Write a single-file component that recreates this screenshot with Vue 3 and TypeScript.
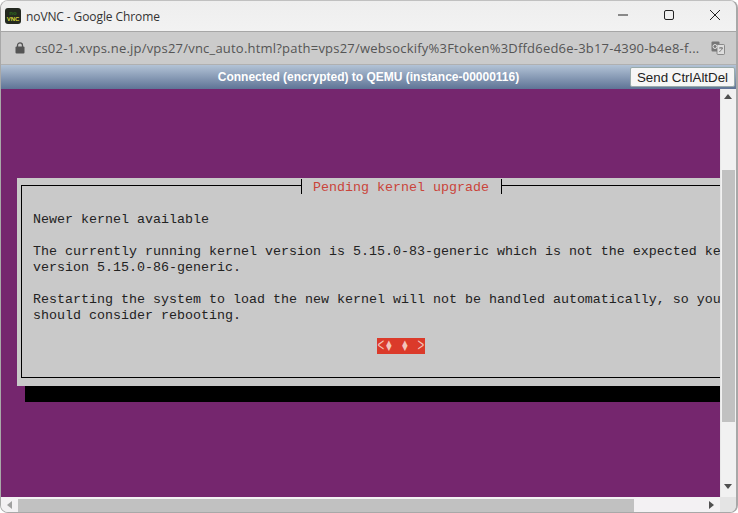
<script setup lang="ts">
const lines: string[] = [
  'Newer kernel available',
  '',
  'The currently running kernel version is 5.15.0-83-generic which is not the expected kernel',
  'version 5.15.0-86-generic.',
  '',
  'Restarting the system to load the new kernel will not be handled automatically, so you',
  'should consider rebooting.',
]
const okCells: string[] = ['<', '♦', ' ', '♦', ' ', '>']
</script>

<template>
  <div class="window">
    <header class="titlebar">
      <div class="favicon"><span class="no">no</span><span class="vnc">VNC</span></div>
      <span class="wintitle">noVNC - Google Chrome</span>
      <div class="controls">
        <svg width="10" height="10" viewBox="0 0 10 10"><path d="M0 5h10" stroke="#222" stroke-width="1" fill="none"/></svg>
        <svg width="10" height="10" viewBox="0 0 10 10"><rect x="0.5" y="0.5" width="9" height="9" rx="1.5" stroke="#222" fill="none"/></svg>
        <svg width="10" height="10" viewBox="0 0 10 10"><path d="M0 0l10 10M10 0L0 10" stroke="#222" stroke-width="1" fill="none"/></svg>
      </div>
    </header>
    <div class="addressbar">
      <svg class="lock" width="10" height="12" viewBox="0 0 10 12"><path d="M2.5 5V3.4a2.5 2.5 0 0 1 5 0V5" stroke="#555" stroke-width="1.3" fill="none"/><rect x="0.5" y="4.6" width="9" height="7" rx="1" fill="#555"/></svg>
      <span class="url">cs02-1.xvps.ne.jp/vps27/vnc_auto.html?path=vps27/websockify%3Ftoken%3Dffd6ed6e-3b17-4390-b4e8-f...</span>
      <svg class="translate" width="14" height="14" viewBox="0 0 14 14"><rect x="0.5" y="0.5" width="8" height="10" rx="1" fill="#777"/><rect x="6" y="3.5" width="7.5" height="10" rx="1" fill="#ddd" stroke="#777" stroke-width="0.8"/><circle cx="4" cy="5.5" r="2" fill="none" stroke="#eee" stroke-width="0.9"/><path d="M8 7h4M10 6v1M11.3 7c-.5 2-1.7 3-3 3.6" stroke="#666" stroke-width="0.8" fill="none"/></svg>
    </div>
    <div class="statusbar">
      <span class="status">Connected (encrypted) to QEMU (instance-00000116)</span>
      <button class="cad">Send CtrlAltDel</button>
    </div>
    <div class="viewport">
      <main class="screen">
        <section class="dialog">
          <div class="frame">
            <h1 class="dlgtitle">Pending kernel upgrade</h1>
            <div class="message">
              <div v-for="(l, i) in lines" :key="i" class="line">{{ l }}</div>
            </div>
            <div class="okrow">
              <div class="ok"><span v-for="(c, i) in okCells" :key="i" class="cell">{{ c }}</span></div>
            </div>
          </div>
        </section>
      </main>
      <aside class="vscroll">
        <i class="arrow up"></i>
        <div class="vthumb"></div>
        <i class="arrow down"></i>
      </aside>
      <div class="hscroll">
        <i class="arrow left"></i>
        <div class="hthumb"></div>
        <i class="arrow right"></i>
      </div>
      <div class="corner"></div>
    </div>
  </div>
</template>

<style>
html, body { margin: 0; background: #fff; }
</style>

<style scoped>
.window {
  width: 738px;
  height: 513px;
  box-sizing: border-box;
  display: flex;
  flex-direction: column;
  overflow: hidden;
  border: 1px solid #a8a8a8;
  border-top-color: #c0c0c0;
  border-right-width: 2px;
  border-radius: 8px;
  background: #f0f0f0;
  font-family: "Open Sans", sans-serif;
}
.titlebar {
  height: 30px;
  flex: none;
  display: flex;
  align-items: center;
  padding-left: 4px;
  background: linear-gradient(#eeeeee, #f2f2f2);
  border-bottom: 1px solid #a6a6a6;
}
.favicon {
  width: 16px;
  height: 16px;
  border-radius: 3px;
  background: #23281f;
  display: flex;
  flex-direction: column;
  align-items: center;
  justify-content: center;
  font: bold 6px/6px "Liberation Sans", sans-serif;
}
.no { color: #2e6b1e; }
.vnc { color: #d8d838; }
.wintitle {
  margin-left: 5px;
  font-size: 12px;
  letter-spacing: -0.1px;
  color: #333;
}
.controls {
  margin-left: auto;
  display: flex;
  gap: 36px;
  padding-right: 16px;
  margin-bottom: 2px;
}
.addressbar {
  height: 33px;
  flex: none;
  box-sizing: border-box;
  display: flex;
  align-items: center;
  padding-left: 14px;
  background: #cbcbcb;
  border-bottom: 1px solid #b0b0b0;
}
.url {
  margin-left: 10px;
  font-size: 13px;
  color: #555;
  white-space: nowrap;
  letter-spacing: 0.21px;
}
.translate { margin-left: auto; margin-right: 11px; }
.statusbar {
  height: 24px;
  flex: none;
  position: relative;
  display: flex;
  justify-content: center;
  align-items: center;
  background: linear-gradient(#b3c3d6, #5f7496);
}
.status {
  color: #fff;
  font: bold 12px "Liberation Sans", sans-serif;
}
.cad {
  position: absolute;
  right: 1px;
  top: 2px;
  width: 105px;
  height: 20px;
  padding: 0;
  border: 1px solid #9aa;
  border-radius: 2px;
  background: #f6f6f6;
  color: #222;
  font: 13.33px "Liberation Sans", sans-serif;
}
.viewport {
  flex: 1;
  min-height: 0;
  display: grid;
  grid-template-columns: 1fr 16px;
  grid-template-rows: 1fr 15px;
}
.screen {
  background: #75266e;
  overflow: hidden;
  padding: 89px 0 0 16px;
  min-width: 0;
}
.dialog {
  width: 768px;
  height: 208px;
  box-sizing: border-box;
  padding: 7px 4px 8px;
  background: #c9c9c9;
  box-shadow: 8px 16px 0 #000;
}
.frame {
  position: relative;
  height: 100%;
  box-sizing: border-box;
  border: 1px solid #000;
  font: 13.33px/16px "Liberation Mono", monospace;
  color: #222;
}
.dlgtitle {
  position: absolute;
  top: -7px;
  left: 279px;
  margin: 0;
  padding: 1px 12px 0 11px;
  height: 14px;
  line-height: 16px;
  border-left: 1px solid #000;
  border-right: 1px solid #000;
  background: #c9c9c9;
  font-weight: normal;
  font-size: 13.33px;
  color: #c9443a;
  white-space: pre;
}
.message {
  padding: 26px 0 0 11px;
}
.line {
  height: 16px;
  white-space: pre;
}
.okrow {
  margin-top: 14px;
  padding-left: 355px;
}
.ok {
  display: flex;
  width: 48px;
  height: 16px;
  background: #db3a2a;
  color: #f3c4ba;
  white-space: pre;
}
.cell {
  width: 8px;
  text-align: center;
  transform: translateY(1px) scale(0.85, 1.35);
}
.vscroll {
  position: relative;
  background: #f1f1f1;
  border-left: 1px solid #e8e8e8;
}
.vthumb {
  position: absolute;
  top: 81px;
  left: 1px;
  width: 13px;
  height: 252px;
  background: #c1c1c1;
}
.hscroll {
  position: relative;
  background: #f3f1f3;
}
.hthumb {
  position: absolute;
  left: 17px;
  top: 2px;
  width: 616px;
  height: 13px;
  background: #c1c1c1;
}
.corner { background: #e4e4e4; }
.arrow {
  position: absolute;
  width: 0;
  height: 0;
  border: 4px solid transparent;
}
.up { border-bottom: 5px solid #505050; border-top: 0; top: 5px; left: 3px; }
.down { border-top: 5px solid #505050; border-bottom: 0; bottom: 8px; left: 3px; }
.left { border-right: 5px solid #a0a0a0; border-left: 0; left: 6px; top: 4px; }
.right { border-left: 5px solid #505050; border-right: 0; right: 6px; top: 4px; }
</style>
